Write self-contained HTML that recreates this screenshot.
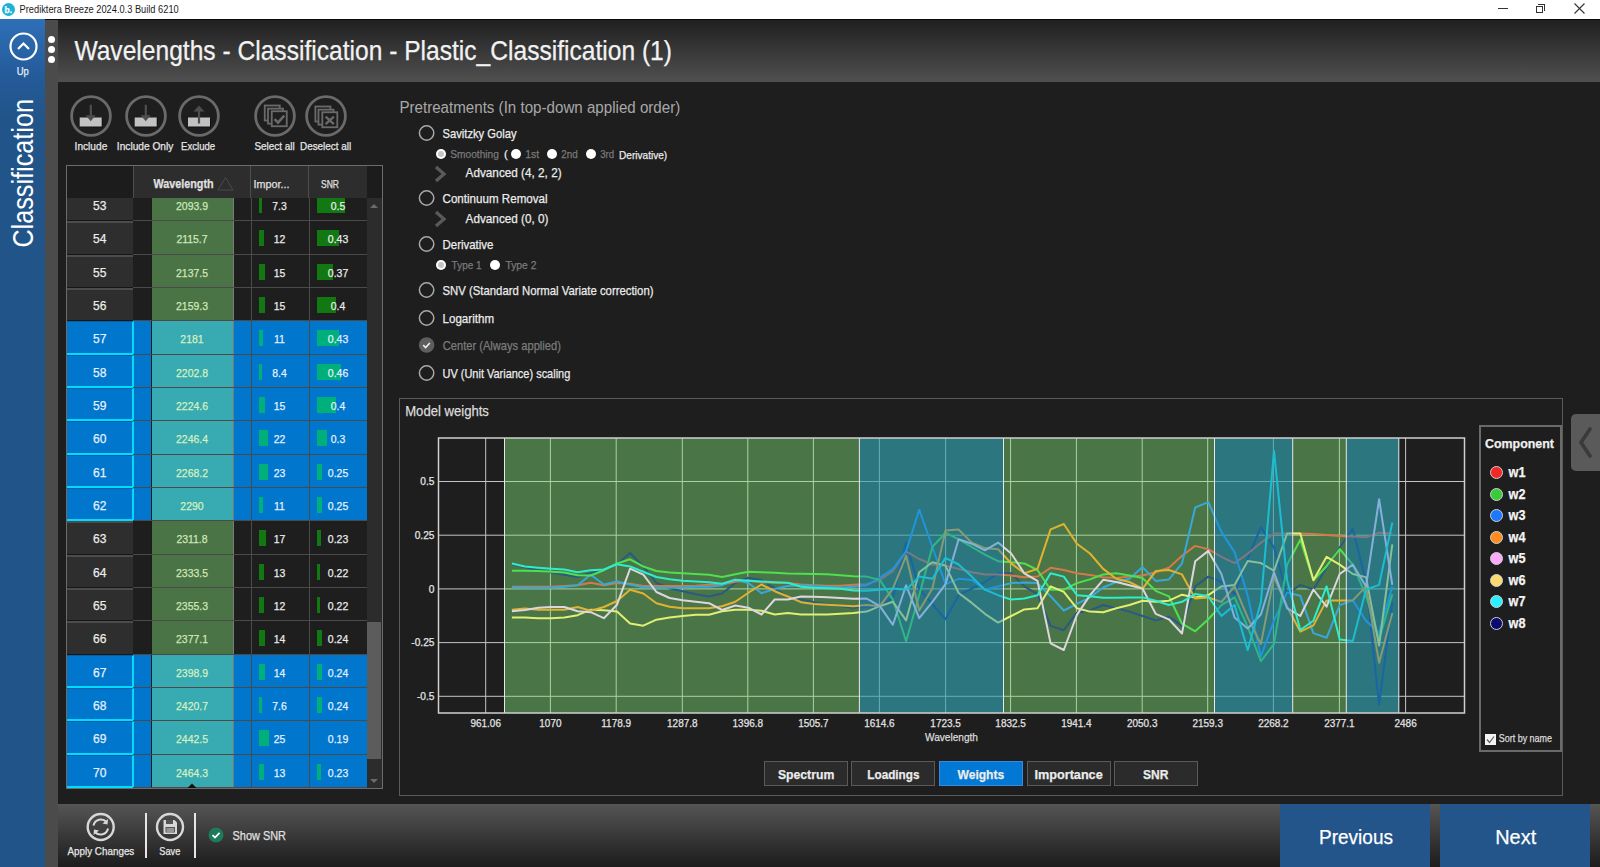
<!DOCTYPE html>
<html><head><meta charset="utf-8"><style>
*{margin:0;padding:0;box-sizing:border-box}
html,body{width:1600px;height:867px;overflow:hidden;background:#1e1e1e;font-family:"Liberation Sans",sans-serif;}
.abs{position:absolute}
</style></head><body>
<div class="abs" style="left:0;top:0;width:1600px;height:19px;background:#fff"></div><div class="abs" style="left:1.6px;top:2.8px;width:13px;height:13px;border-radius:50%;background:#1cb3d6"></div><div class="abs" style="left:1498px;top:8px;width:10px;height:1px;background:#333"></div><div class="abs" style="left:1536px;top:6px;width:7px;height:7px;border:1px solid #333"></div><div class="abs" style="left:1538px;top:4px;width:7px;height:7px;border-top:1px solid #333;border-right:1px solid #333"></div><svg class="abs" style="left:1574px;top:3px" width="11" height="11"><path d="M0.5 0.5L10.5 10.5M10.5 0.5L0.5 10.5" stroke="#333" stroke-width="1.1"/></svg><div class="abs" style="left:0;top:19px;width:45px;height:848px;background:linear-gradient(#2e6fb6 0px,#235a98 60px,#215489 100px,#215489 848px)"></div><svg class="abs" style="left:8px;top:31px" width="32" height="32"><circle cx="15.5" cy="15.5" r="13" fill="none" stroke="#fff" stroke-width="2.2"/><path d="M10 18L15.5 12.5L21 18" fill="none" stroke="#fff" stroke-width="2.2"/></svg><div class="abs" style="left:45px;top:19px;width:13px;height:848px;background:#4b4b4b"></div><div class="abs" style="left:48px;top:35.5px;width:7px;height:7px;border-radius:50%;background:#fff"></div><div class="abs" style="left:48px;top:45.5px;width:7px;height:7px;border-radius:50%;background:#fff"></div><div class="abs" style="left:48px;top:55.5px;width:7px;height:7px;border-radius:50%;background:#fff"></div><div class="abs" style="left:58px;top:19px;width:1542px;height:63px;background:linear-gradient(#1f1f1f,#505050)"></div><div class="abs" style="left:45px;top:19px;width:1555px;height:1px;background:#0a0a0a"></div><div class="abs" style="left:58px;top:804px;width:1542px;height:63px;background:linear-gradient(#555555,#1c1c1c)"></div><svg class="abs" style="left:84px;top:811px" width="34" height="34"><circle cx="16.7" cy="16" r="13" fill="none" stroke="#d8d8d8" stroke-width="2.4"/><path d="M9.5 14.5A7.5 7.5 0 0 1 22.5 11" fill="none" stroke="#d8d8d8" stroke-width="2"/><path d="M24 8L23.5 13.5L18.5 12.5Z" fill="#d8d8d8"/><path d="M24 17.5A7.5 7.5 0 0 1 11 21" fill="none" stroke="#d8d8d8" stroke-width="2"/><path d="M9.5 24L10 18.5L15 19.5Z" fill="#d8d8d8"/></svg><div class="abs" style="left:144.5px;top:813px;width:2px;height:45px;background:#e6e6e6"></div><svg class="abs" style="left:154px;top:811px" width="34" height="34"><circle cx="16" cy="16" r="13" fill="none" stroke="#d8d8d8" stroke-width="2.4"/><path d="M9.5 9H20.5L23 11.5V23H9.5Z" fill="#d8d8d8"/><rect x="12" y="9" width="7" height="4" fill="#555"/><rect x="11.5" y="16" width="9.5" height="5.5" fill="#555"/><rect x="12.5" y="17.5" width="7.5" height="1" fill="#d8d8d8"/><rect x="12.5" y="19.5" width="7.5" height="1" fill="#d8d8d8"/></svg><div class="abs" style="left:194px;top:813px;width:2px;height:45px;background:#e6e6e6"></div><svg class="abs" style="left:208px;top:827px" width="16" height="16"><circle cx="8" cy="8" r="7.5" fill="#1d7a5c"/><path d="M4.5 8.2L7 10.5L11.5 5.8" fill="none" stroke="#fff" stroke-width="1.8"/></svg><div class="abs" style="left:1280px;top:804px;width:150px;height:63px;background:#23548a"></div><div class="abs" style="left:1440px;top:804px;width:150px;height:63px;background:#23548a"></div><svg class="abs" style="left:68.3px;top:92.5px" width="46" height="46"><circle cx="23" cy="23" r="19.4" fill="none" stroke="#6a6a6a" stroke-width="2.8"/><rect x="12.7" y="25.5" width="22" height="9" fill="#111"/><rect x="11.7" y="24.5" width="22" height="9" fill="#c2c2c2"/><rect x="21.7" y="11.7" width="2.2" height="12" fill="#4e4e4e"/><path d="M17.7 22.3H27.7L22.7 28.3Z" fill="#4e4e4e"/></svg><svg class="abs" style="left:122.80000000000001px;top:92.5px" width="46" height="46"><circle cx="23" cy="23" r="19.4" fill="none" stroke="#6a6a6a" stroke-width="2.8"/><rect x="12.7" y="25.5" width="22" height="9" fill="#111"/><rect x="11.7" y="24.5" width="22" height="9" fill="#c2c2c2"/><rect x="21.7" y="11.7" width="2.2" height="12" fill="#4e4e4e"/><path d="M17.7 22.3H27.7L22.7 28.3Z" fill="#4e4e4e"/></svg><svg class="abs" style="left:176px;top:92.5px" width="46" height="46"><circle cx="23" cy="23" r="19.4" fill="none" stroke="#6a6a6a" stroke-width="2.8"/><rect x="13" y="25.5" width="22" height="9" fill="#111"/><rect x="12" y="24.5" width="22" height="9" fill="#c2c2c2"/><rect x="21.9" y="18" width="2.2" height="12.5" fill="#4e4e4e"/><path d="M17.5 18.5H28.5L23 12.5Z" fill="#4e4e4e"/></svg><svg class="abs" style="left:251.5px;top:92.75px" width="46" height="46"><circle cx="23" cy="23" r="19.4" fill="none" stroke="#6a6a6a" stroke-width="2.8"/><rect x="12.75" y="12.5" width="15" height="15" fill="none" stroke="#6a6a6a" stroke-width="1.8"/><rect x="16" y="15.65" width="15" height="15" fill="#1e1e1e" stroke="#6a6a6a" stroke-width="1.8"/><rect x="19.75" y="18.25" width="15" height="15" fill="#1e1e1e" stroke="#6a6a6a" stroke-width="1.8"/><path d="M22.5 26.15L26 29.55L32.25 22.65" fill="none" stroke="#6a6a6a" stroke-width="2.6"/></svg><svg class="abs" style="left:302.6px;top:92.75px" width="46" height="46"><circle cx="23" cy="23" r="19.4" fill="none" stroke="#6a6a6a" stroke-width="2.8"/><rect x="12.4" y="13.5" width="15" height="15" fill="none" stroke="#6a6a6a" stroke-width="1.8"/><rect x="15.5" y="16.65" width="15" height="15" fill="#1e1e1e" stroke="#6a6a6a" stroke-width="1.8"/><rect x="19.3" y="19.25" width="15" height="15" fill="#1e1e1e" stroke="#6a6a6a" stroke-width="1.8"/><path d="M22.6 23.7L30.9 31.1M30.9 23.7L22.6 31.1" fill="none" stroke="#6a6a6a" stroke-width="2.4"/></svg><div class="abs" style="left:66px;top:165px;width:317px;height:624px;border:1px solid #6c6c6c;background:#1e1e1e"></div><div class="abs" style="left:67px;top:198px;width:300px;height:590px;overflow:hidden"><div class="abs" style="left:65.5px;top:-10px;width:234.5px;height:33px;background:#1e1e1e"></div><div class="abs" style="left:0;top:-10px;width:65.5px;height:33px;background:#2e2e2e;border-top:2px solid #4c4c4c;border-bottom:1px solid #161616"></div><div class="abs" style="left:83.6px;top:-10px;width:83px;height:33px;background:#4a7346;border-left:1px solid #1a1a1a;border-right:1px solid #7a7a7a"></div><div class="abs" style="left:192px;top:-1px;width:2.9px;height:16px;background:#127812"></div><div class="abs" style="left:250px;top:-1px;width:27.9px;height:16px;background:#127812"></div><div class="abs" style="left:65.5px;top:22px;width:234.5px;height:1px;background:#4a4a4a"></div><div class="abs" style="left:65.5px;top:23px;width:234.5px;height:34px;background:#1e1e1e"></div><div class="abs" style="left:0;top:23px;width:65.5px;height:34px;background:#2e2e2e;border-top:2px solid #4c4c4c;border-bottom:1px solid #161616"></div><div class="abs" style="left:83.6px;top:23px;width:83px;height:34px;background:#4a7346;border-left:1px solid #1a1a1a;border-right:1px solid #7a7a7a"></div><div class="abs" style="left:192px;top:32px;width:4.8px;height:16px;background:#127812"></div><div class="abs" style="left:250px;top:32px;width:21.6px;height:16px;background:#127812"></div><div class="abs" style="left:65.5px;top:56px;width:234.5px;height:1px;background:#4a4a4a"></div><div class="abs" style="left:65.5px;top:57px;width:234.5px;height:33px;background:#1e1e1e"></div><div class="abs" style="left:0;top:57px;width:65.5px;height:33px;background:#2e2e2e;border-top:2px solid #4c4c4c;border-bottom:1px solid #161616"></div><div class="abs" style="left:83.6px;top:57px;width:83px;height:33px;background:#4a7346;border-left:1px solid #1a1a1a;border-right:1px solid #7a7a7a"></div><div class="abs" style="left:192px;top:66px;width:6.0px;height:16px;background:#127812"></div><div class="abs" style="left:250px;top:66px;width:16.2px;height:16px;background:#127812"></div><div class="abs" style="left:65.5px;top:89px;width:234.5px;height:1px;background:#4a4a4a"></div><div class="abs" style="left:65.5px;top:90px;width:234.5px;height:33px;background:#1e1e1e"></div><div class="abs" style="left:0;top:90px;width:65.5px;height:33px;background:#2e2e2e;border-top:2px solid #4c4c4c;border-bottom:1px solid #161616"></div><div class="abs" style="left:83.6px;top:90px;width:83px;height:33px;background:#4a7346;border-left:1px solid #1a1a1a;border-right:1px solid #7a7a7a"></div><div class="abs" style="left:192px;top:99px;width:6.0px;height:16px;background:#127812"></div><div class="abs" style="left:250px;top:99px;width:18.9px;height:16px;background:#127812"></div><div class="abs" style="left:65.5px;top:122px;width:234.5px;height:1px;background:#4a4a4a"></div><div class="abs" style="left:65.5px;top:123px;width:234.5px;height:34px;background:#0077cc"></div><div class="abs" style="left:0;top:123px;width:67px;height:34px;background:#0077cc;border-top:1px solid #0060a8;border-bottom:2px solid #00dcff;border-right:2px solid #00dcff"></div><div class="abs" style="left:83.6px;top:123px;width:83px;height:34px;background:#37abb1;border-left:1px solid #1a1a1a;border-right:1px solid #7a7a7a"></div><div class="abs" style="left:192px;top:132px;width:4.4px;height:16px;background:#00b07a"></div><div class="abs" style="left:250px;top:132px;width:21.6px;height:16px;background:#00b07a"></div><div class="abs" style="left:65.5px;top:156px;width:234.5px;height:1px;background:#4a4a4a"></div><div class="abs" style="left:65.5px;top:157px;width:234.5px;height:33px;background:#0077cc"></div><div class="abs" style="left:0;top:157px;width:67px;height:33px;background:#0077cc;border-top:1px solid #0060a8;border-bottom:2px solid #00dcff;border-right:2px solid #00dcff"></div><div class="abs" style="left:83.6px;top:157px;width:83px;height:33px;background:#37abb1;border-left:1px solid #1a1a1a;border-right:1px solid #7a7a7a"></div><div class="abs" style="left:192px;top:166px;width:3.4px;height:16px;background:#00b07a"></div><div class="abs" style="left:250px;top:166px;width:24.3px;height:16px;background:#00b07a"></div><div class="abs" style="left:65.5px;top:189px;width:234.5px;height:1px;background:#4a4a4a"></div><div class="abs" style="left:65.5px;top:190px;width:234.5px;height:33px;background:#0077cc"></div><div class="abs" style="left:0;top:190px;width:67px;height:33px;background:#0077cc;border-top:1px solid #0060a8;border-bottom:2px solid #00dcff;border-right:2px solid #00dcff"></div><div class="abs" style="left:83.6px;top:190px;width:83px;height:33px;background:#37abb1;border-left:1px solid #1a1a1a;border-right:1px solid #7a7a7a"></div><div class="abs" style="left:192px;top:199px;width:6.0px;height:16px;background:#00b07a"></div><div class="abs" style="left:250px;top:199px;width:18.9px;height:16px;background:#00b07a"></div><div class="abs" style="left:65.5px;top:222px;width:234.5px;height:1px;background:#4a4a4a"></div><div class="abs" style="left:65.5px;top:223px;width:234.5px;height:34px;background:#0077cc"></div><div class="abs" style="left:0;top:223px;width:67px;height:34px;background:#0077cc;border-top:1px solid #0060a8;border-bottom:2px solid #00dcff;border-right:2px solid #00dcff"></div><div class="abs" style="left:83.6px;top:223px;width:83px;height:34px;background:#37abb1;border-left:1px solid #1a1a1a;border-right:1px solid #7a7a7a"></div><div class="abs" style="left:192px;top:232px;width:8.8px;height:16px;background:#00b07a"></div><div class="abs" style="left:250px;top:232px;width:9.9px;height:16px;background:#00b07a"></div><div class="abs" style="left:65.5px;top:256px;width:234.5px;height:1px;background:#4a4a4a"></div><div class="abs" style="left:65.5px;top:257px;width:234.5px;height:33px;background:#0077cc"></div><div class="abs" style="left:0;top:257px;width:67px;height:33px;background:#0077cc;border-top:1px solid #0060a8;border-bottom:2px solid #00dcff;border-right:2px solid #00dcff"></div><div class="abs" style="left:83.6px;top:257px;width:83px;height:33px;background:#37abb1;border-left:1px solid #1a1a1a;border-right:1px solid #7a7a7a"></div><div class="abs" style="left:192px;top:266px;width:9.2px;height:16px;background:#00b07a"></div><div class="abs" style="left:250px;top:266px;width:5.4px;height:16px;background:#00b07a"></div><div class="abs" style="left:65.5px;top:289px;width:234.5px;height:1px;background:#4a4a4a"></div><div class="abs" style="left:65.5px;top:290px;width:234.5px;height:33px;background:#0077cc"></div><div class="abs" style="left:0;top:290px;width:67px;height:33px;background:#0077cc;border-top:1px solid #0060a8;border-bottom:2px solid #00dcff;border-right:2px solid #00dcff"></div><div class="abs" style="left:83.6px;top:290px;width:83px;height:33px;background:#37abb1;border-left:1px solid #1a1a1a;border-right:1px solid #7a7a7a"></div><div class="abs" style="left:192px;top:299px;width:4.4px;height:16px;background:#00b07a"></div><div class="abs" style="left:250px;top:299px;width:5.4px;height:16px;background:#00b07a"></div><div class="abs" style="left:65.5px;top:322px;width:234.5px;height:1px;background:#4a4a4a"></div><div class="abs" style="left:65.5px;top:323px;width:234.5px;height:34px;background:#1e1e1e"></div><div class="abs" style="left:0;top:323px;width:65.5px;height:34px;background:#2e2e2e;border-top:2px solid #4c4c4c;border-bottom:1px solid #161616"></div><div class="abs" style="left:83.6px;top:323px;width:83px;height:34px;background:#4a7346;border-left:1px solid #1a1a1a;border-right:1px solid #7a7a7a"></div><div class="abs" style="left:192px;top:332px;width:6.8px;height:16px;background:#127812"></div><div class="abs" style="left:250px;top:332px;width:3.6px;height:16px;background:#127812"></div><div class="abs" style="left:65.5px;top:356px;width:234.5px;height:1px;background:#4a4a4a"></div><div class="abs" style="left:65.5px;top:357px;width:234.5px;height:33px;background:#1e1e1e"></div><div class="abs" style="left:0;top:357px;width:65.5px;height:33px;background:#2e2e2e;border-top:2px solid #4c4c4c;border-bottom:1px solid #161616"></div><div class="abs" style="left:83.6px;top:357px;width:83px;height:33px;background:#4a7346;border-left:1px solid #1a1a1a;border-right:1px solid #7a7a7a"></div><div class="abs" style="left:192px;top:366px;width:5.2px;height:16px;background:#127812"></div><div class="abs" style="left:250px;top:366px;width:2.7px;height:16px;background:#127812"></div><div class="abs" style="left:65.5px;top:389px;width:234.5px;height:1px;background:#4a4a4a"></div><div class="abs" style="left:65.5px;top:390px;width:234.5px;height:33px;background:#1e1e1e"></div><div class="abs" style="left:0;top:390px;width:65.5px;height:33px;background:#2e2e2e;border-top:2px solid #4c4c4c;border-bottom:1px solid #161616"></div><div class="abs" style="left:83.6px;top:390px;width:83px;height:33px;background:#4a7346;border-left:1px solid #1a1a1a;border-right:1px solid #7a7a7a"></div><div class="abs" style="left:192px;top:399px;width:4.8px;height:16px;background:#127812"></div><div class="abs" style="left:250px;top:399px;width:2.7px;height:16px;background:#127812"></div><div class="abs" style="left:65.5px;top:422px;width:234.5px;height:1px;background:#4a4a4a"></div><div class="abs" style="left:65.5px;top:423px;width:234.5px;height:34px;background:#1e1e1e"></div><div class="abs" style="left:0;top:423px;width:65.5px;height:34px;background:#2e2e2e;border-top:2px solid #4c4c4c;border-bottom:1px solid #161616"></div><div class="abs" style="left:83.6px;top:423px;width:83px;height:34px;background:#4a7346;border-left:1px solid #1a1a1a;border-right:1px solid #7a7a7a"></div><div class="abs" style="left:192px;top:432px;width:5.6px;height:16px;background:#127812"></div><div class="abs" style="left:250px;top:432px;width:4.5px;height:16px;background:#127812"></div><div class="abs" style="left:65.5px;top:456px;width:234.5px;height:1px;background:#4a4a4a"></div><div class="abs" style="left:65.5px;top:457px;width:234.5px;height:33px;background:#0077cc"></div><div class="abs" style="left:0;top:457px;width:67px;height:33px;background:#0077cc;border-top:1px solid #0060a8;border-bottom:2px solid #00dcff;border-right:2px solid #00dcff"></div><div class="abs" style="left:83.6px;top:457px;width:83px;height:33px;background:#37abb1;border-left:1px solid #1a1a1a;border-right:1px solid #7a7a7a"></div><div class="abs" style="left:192px;top:466px;width:5.6px;height:16px;background:#00b07a"></div><div class="abs" style="left:250px;top:466px;width:4.5px;height:16px;background:#00b07a"></div><div class="abs" style="left:65.5px;top:489px;width:234.5px;height:1px;background:#4a4a4a"></div><div class="abs" style="left:65.5px;top:490px;width:234.5px;height:33px;background:#0077cc"></div><div class="abs" style="left:0;top:490px;width:67px;height:33px;background:#0077cc;border-top:1px solid #0060a8;border-bottom:2px solid #00dcff;border-right:2px solid #00dcff"></div><div class="abs" style="left:83.6px;top:490px;width:83px;height:33px;background:#37abb1;border-left:1px solid #1a1a1a;border-right:1px solid #7a7a7a"></div><div class="abs" style="left:192px;top:499px;width:3.0px;height:16px;background:#00b07a"></div><div class="abs" style="left:250px;top:499px;width:4.5px;height:16px;background:#00b07a"></div><div class="abs" style="left:65.5px;top:522px;width:234.5px;height:1px;background:#4a4a4a"></div><div class="abs" style="left:65.5px;top:523px;width:234.5px;height:34px;background:#0077cc"></div><div class="abs" style="left:0;top:523px;width:67px;height:34px;background:#0077cc;border-top:1px solid #0060a8;border-bottom:2px solid #00dcff;border-right:2px solid #00dcff"></div><div class="abs" style="left:83.6px;top:523px;width:83px;height:34px;background:#37abb1;border-left:1px solid #1a1a1a;border-right:1px solid #7a7a7a"></div><div class="abs" style="left:192px;top:532px;width:10.0px;height:16px;background:#00b07a"></div><div class="abs" style="left:65.5px;top:556px;width:234.5px;height:1px;background:#4a4a4a"></div><div class="abs" style="left:65.5px;top:557px;width:234.5px;height:33px;background:#0077cc"></div><div class="abs" style="left:0;top:557px;width:67px;height:33px;background:#0077cc;border-top:1px solid #0060a8;border-bottom:2px solid #00dcff;border-right:2px solid #00dcff"></div><div class="abs" style="left:83.6px;top:557px;width:83px;height:33px;background:#37abb1;border-left:1px solid #1a1a1a;border-right:1px solid #7a7a7a"></div><div class="abs" style="left:192px;top:566px;width:5.2px;height:16px;background:#00b07a"></div><div class="abs" style="left:250px;top:566px;width:3.6px;height:16px;background:#00b07a"></div><div class="abs" style="left:65.5px;top:589px;width:234.5px;height:1px;background:#4a4a4a"></div><div class="abs" style="left:183.5px;top:0;width:1px;height:590px;background:#4a4a4a"></div><div class="abs" style="left:241.5px;top:0;width:1px;height:590px;background:#4a4a4a"></div></div><div class="abs" style="left:67px;top:166px;width:66px;height:32px;background:#1c1c1c"></div><div class="abs" style="left:133px;top:166px;width:234px;height:32px;background:#2d2d2d"></div><div class="abs" style="left:133px;top:166px;width:1px;height:32px;background:#4e4e4e"></div><div class="abs" style="left:250px;top:166px;width:1px;height:32px;background:#4e4e4e"></div><div class="abs" style="left:308px;top:166px;width:1px;height:32px;background:#4e4e4e"></div><svg class="abs" style="left:217px;top:176px" width="17" height="15"><path d="M1 14L8.5 1.5L16 14Z" fill="none" stroke="#4a4a4a" stroke-width="1"/></svg><div class="abs" style="left:367px;top:166px;width:15px;height:32px;background:#1c1c1c"></div><div class="abs" style="left:367px;top:198px;width:15px;height:590px;background:#2c2c2c"></div><div class="abs" style="left:367px;top:622px;width:14px;height:137px;background:#5c5c5c"></div><svg class="abs" style="left:369px;top:202px" width="10" height="8"><path d="M1 6L5 2L9 6Z" fill="#6a6a6a"/></svg><svg class="abs" style="left:369px;top:777px" width="10" height="8"><path d="M1 2L5 6L9 2Z" fill="#6a6a6a"/></svg><svg class="abs" style="left:187px;top:782px" width="10" height="6"><path d="M0.5 6L5 1.5L9.5 6Z" fill="#111"/></svg><svg class="abs" style="left:417px;top:123.75px" width="20" height="18"><circle cx="9.6" cy="9" r="7.2" fill="none" stroke="#a8a8a8" stroke-width="1.5"/></svg><div class="abs" style="left:435.9px;top:149.1px;width:10px;height:10px;border-radius:50%;background:#fff"></div><div class="abs" style="left:437.59999999999997px;top:150.79999999999998px;width:6.6px;height:6.6px;border-radius:50%;background:#c4c4c4"></div><div class="abs" style="left:510.9px;top:149.1px;width:10px;height:10px;border-radius:50%;background:#fff"></div><div class="abs" style="left:546.9px;top:149.1px;width:10px;height:10px;border-radius:50%;background:#fff"></div><div class="abs" style="left:585.9px;top:149.1px;width:10px;height:10px;border-radius:50%;background:#fff"></div><svg class="abs" style="left:433px;top:164.5px" width="16" height="18"><path d="M3 2L11 9L3 16" fill="none" stroke="#5a5a5a" stroke-width="3.3"/></svg><svg class="abs" style="left:417px;top:189px" width="20" height="18"><circle cx="9.6" cy="9" r="7.2" fill="none" stroke="#a8a8a8" stroke-width="1.5"/></svg><svg class="abs" style="left:433px;top:210px" width="16" height="18"><path d="M3 2L11 9L3 16" fill="none" stroke="#5a5a5a" stroke-width="3.3"/></svg><svg class="abs" style="left:417px;top:234.5px" width="20" height="18"><circle cx="9.6" cy="9" r="7.2" fill="none" stroke="#a8a8a8" stroke-width="1.5"/></svg><div class="abs" style="left:435.9px;top:260px;width:10px;height:10px;border-radius:50%;background:#fff"></div><div class="abs" style="left:437.59999999999997px;top:261.7px;width:6.6px;height:6.6px;border-radius:50%;background:#c4c4c4"></div><div class="abs" style="left:490.25px;top:260px;width:10px;height:10px;border-radius:50%;background:#fff"></div><svg class="abs" style="left:417px;top:281.4px" width="20" height="18"><circle cx="9.6" cy="9" r="7.2" fill="none" stroke="#a8a8a8" stroke-width="1.5"/></svg><svg class="abs" style="left:417px;top:308.75px" width="20" height="18"><circle cx="9.6" cy="9" r="7.2" fill="none" stroke="#a8a8a8" stroke-width="1.5"/></svg><svg class="abs" style="left:417px;top:336px" width="20" height="18"><circle cx="9.6" cy="9" r="7.8" fill="#5e5e5e"/><path d="M6.2 9.2L8.6 11.5L12.8 7" fill="none" stroke="#f0f0f0" stroke-width="1.6"/></svg><svg class="abs" style="left:417px;top:363.9px" width="20" height="18"><circle cx="9.6" cy="9" r="7.2" fill="none" stroke="#a8a8a8" stroke-width="1.5"/></svg><div class="abs" style="left:399px;top:397.5px;width:1164px;height:398px;border:1px solid #5a5a5a"></div><svg class="abs" style="left:0;top:0" width="1600" height="867" viewBox="0 0 1600 867"><rect x="438.5" y="438" width="1026.0" height="275" fill="#1e1e1e"/><line x1="485.7" y1="438" x2="485.7" y2="713" stroke="#c4c4c4" stroke-width="1"/><line x1="550.4" y1="438" x2="550.4" y2="713" stroke="#c4c4c4" stroke-width="1"/><line x1="616.2" y1="438" x2="616.2" y2="713" stroke="#c4c4c4" stroke-width="1"/><line x1="682.3" y1="438" x2="682.3" y2="713" stroke="#c4c4c4" stroke-width="1"/><line x1="747.8" y1="438" x2="747.8" y2="713" stroke="#c4c4c4" stroke-width="1"/><line x1="813.4" y1="438" x2="813.4" y2="713" stroke="#c4c4c4" stroke-width="1"/><line x1="879.4" y1="438" x2="879.4" y2="713" stroke="#c4c4c4" stroke-width="1"/><line x1="945.6" y1="438" x2="945.6" y2="713" stroke="#c4c4c4" stroke-width="1"/><line x1="1010.6" y1="438" x2="1010.6" y2="713" stroke="#c4c4c4" stroke-width="1"/><line x1="1076.4" y1="438" x2="1076.4" y2="713" stroke="#c4c4c4" stroke-width="1"/><line x1="1142.2" y1="438" x2="1142.2" y2="713" stroke="#c4c4c4" stroke-width="1"/><line x1="1207.7" y1="438" x2="1207.7" y2="713" stroke="#c4c4c4" stroke-width="1"/><line x1="1273.4" y1="438" x2="1273.4" y2="713" stroke="#c4c4c4" stroke-width="1"/><line x1="1339.4" y1="438" x2="1339.4" y2="713" stroke="#c4c4c4" stroke-width="1"/><line x1="1405.6" y1="438" x2="1405.6" y2="713" stroke="#c4c4c4" stroke-width="1"/><line x1="438.5" y1="481.5" x2="1464.5" y2="481.5" stroke="#c4c4c4" stroke-width="1"/><line x1="438.5" y1="535.2" x2="1464.5" y2="535.2" stroke="#c4c4c4" stroke-width="1"/><line x1="438.5" y1="588.9" x2="1464.5" y2="588.9" stroke="#c4c4c4" stroke-width="1"/><line x1="438.5" y1="642.6" x2="1464.5" y2="642.6" stroke="#c4c4c4" stroke-width="1"/><line x1="438.5" y1="696.3" x2="1464.5" y2="696.3" stroke="#c4c4c4" stroke-width="1"/><rect x="504.5" y="438" width="894.3" height="275" fill="#4a7547"/><line x1="550.4" y1="438" x2="550.4" y2="713" stroke="#a9d3a2" stroke-width="1"/><line x1="616.2" y1="438" x2="616.2" y2="713" stroke="#a9d3a2" stroke-width="1"/><line x1="682.3" y1="438" x2="682.3" y2="713" stroke="#a9d3a2" stroke-width="1"/><line x1="747.8" y1="438" x2="747.8" y2="713" stroke="#a9d3a2" stroke-width="1"/><line x1="813.4" y1="438" x2="813.4" y2="713" stroke="#a9d3a2" stroke-width="1"/><line x1="879.4" y1="438" x2="879.4" y2="713" stroke="#a9d3a2" stroke-width="1"/><line x1="945.6" y1="438" x2="945.6" y2="713" stroke="#a9d3a2" stroke-width="1"/><line x1="1010.6" y1="438" x2="1010.6" y2="713" stroke="#a9d3a2" stroke-width="1"/><line x1="1076.4" y1="438" x2="1076.4" y2="713" stroke="#a9d3a2" stroke-width="1"/><line x1="1142.2" y1="438" x2="1142.2" y2="713" stroke="#a9d3a2" stroke-width="1"/><line x1="1207.7" y1="438" x2="1207.7" y2="713" stroke="#a9d3a2" stroke-width="1"/><line x1="1273.4" y1="438" x2="1273.4" y2="713" stroke="#a9d3a2" stroke-width="1"/><line x1="1339.4" y1="438" x2="1339.4" y2="713" stroke="#a9d3a2" stroke-width="1"/><line x1="504.5" y1="481.5" x2="1398.8" y2="481.5" stroke="#a9d3a2" stroke-width="1"/><line x1="504.5" y1="535.2" x2="1398.8" y2="535.2" stroke="#a9d3a2" stroke-width="1"/><line x1="504.5" y1="588.9" x2="1398.8" y2="588.9" stroke="#a9d3a2" stroke-width="1"/><line x1="504.5" y1="642.6" x2="1398.8" y2="642.6" stroke="#a9d3a2" stroke-width="1"/><line x1="504.5" y1="696.3" x2="1398.8" y2="696.3" stroke="#a9d3a2" stroke-width="1"/><polyline points="511.9,564.2 525.0,567.2 538.2,570.2 551.3,572.5 564.4,574.7 577.6,577.0 590.7,573.2 603.9,570.2 617.0,564.2 630.1,553.0 643.3,566.5 656.4,583.0 669.6,588.2 682.7,591.2 695.8,594.2 709.0,596.5 722.1,593.5 735.3,583.0 748.4,577.7 761.5,580.0 774.7,588.2 787.8,597.2 801.0,599.5 814.1,602.2 827.2,604.0 840.4,606.2 853.5,607.7 866.7,606.2 879.8,607.3 892.9,597.4 906.1,542.6 919.2,588.6 932.4,604.0 945.5,619.3 958.6,595.2 971.8,588.6 984.9,582.1 998.1,573.3 1011.2,573.3 1024.3,586.4 1037.5,594.1 1050.6,625.9 1063.8,630.2 1076.9,612.7 1090.0,610.5 1103.2,605.0 1116.3,608.3 1129.5,611.6 1142.6,616.0 1155.7,620.4 1168.9,616.7 1182.0,625.9 1195.2,586.4 1208.3,576.6 1221.4,581.7 1234.6,594.2 1247.7,558.4 1260.9,527.2 1274.0,547.5 1287.1,594.2 1300.3,584.9 1313.4,589.5 1326.6,567.7 1339.7,547.5 1352.8,528.8 1366.0,581.7 1379.1,704.8 1392.3,602.0" fill="none" stroke="#2a5a82" stroke-width="2" stroke-linejoin="round"/><polyline points="511.9,586.7 525.0,586.7 538.2,586.7 551.3,586.7 564.4,586.0 577.6,585.2 590.7,582.7 603.9,585.2 617.0,583.0 630.1,583.7 643.3,586.0 656.4,586.0 669.6,586.0 682.7,586.0 695.8,585.7 709.0,584.8 722.1,584.2 735.3,581.8 748.4,580.7 761.5,582.2 774.7,582.7 787.8,583.0 801.0,584.5 814.1,585.2 827.2,585.7 840.4,585.7 853.5,584.8 866.7,584.2 879.8,579.9 892.9,571.1 906.1,551.4 919.2,559.0 932.4,564.5 945.5,565.6 958.6,568.9 971.8,572.2 984.9,574.4 998.1,574.4 1011.2,575.5 1024.3,577.2 1037.5,576.6 1050.6,567.8 1063.8,570.0 1076.9,573.3 1090.0,575.0 1103.2,577.2 1116.3,578.1 1129.5,576.6 1142.6,575.5 1155.7,572.2 1168.9,567.8 1182.0,555.7 1195.2,545.9 1208.3,549.2 1221.4,556.8 1234.6,563.1 1247.7,553.7 1260.9,542.8 1274.0,533.5 1287.1,533.5 1300.3,533.5 1313.4,534.1 1326.6,535.0 1339.7,536.0 1352.8,536.6 1366.0,537.2 1379.1,532.8 1392.3,533.5" fill="none" stroke="#d27a4a" stroke-width="2" stroke-linejoin="round"/><polyline points="511.9,587.2 525.0,587.8 538.2,587.8 551.3,587.8 564.4,586.7 577.6,585.2 590.7,574.7 603.9,584.5 617.0,581.5 630.1,584.5 643.3,587.2 656.4,587.8 669.6,587.8 682.7,587.5 695.8,586.7 709.0,586.7 722.1,585.2 735.3,579.7 748.4,583.0 761.5,593.2 774.7,589.0 787.8,586.0 801.0,585.2 814.1,586.0 827.2,586.7 840.4,587.8 853.5,586.7 866.7,585.3 879.8,577.7 892.9,568.9 906.1,551.4 919.2,509.7 932.4,547.0 945.5,584.2 958.6,578.8 971.8,579.9 984.9,589.7 998.1,586.4 1011.2,583.1 1024.3,582.5 1037.5,583.1 1050.6,596.3 1063.8,610.5 1076.9,603.9 1090.0,597.4 1103.2,587.5 1116.3,582.0 1129.5,578.7 1142.6,567.1 1155.7,580.9 1168.9,579.4 1182.0,563.4 1195.2,507.5 1208.3,502.1 1221.4,531.9 1234.6,552.1 1247.7,595.8 1260.9,656.5 1274.0,620.7 1287.1,592.6 1300.3,595.8 1313.4,633.1 1326.6,637.8 1339.7,605.1 1352.8,600.4 1366.0,620.7 1379.1,633.1 1392.3,586.4" fill="none" stroke="#36a8dc" stroke-width="2" stroke-linejoin="round"/><polyline points="511.9,570.7 525.0,570.7 538.2,571.0 551.3,571.7 564.4,572.5 577.6,575.2 590.7,575.5 603.9,570.2 617.0,563.5 630.1,559.3 643.3,566.5 656.4,571.0 669.6,572.5 682.7,573.2 695.8,574.0 709.0,574.7 722.1,577.0 735.3,574.3 748.4,571.7 761.5,572.2 774.7,572.8 787.8,573.4 801.0,573.7 814.1,574.0 827.2,574.3 840.4,575.2 853.5,576.2 866.7,576.6 879.8,579.9 892.9,599.6 906.1,641.2 919.2,595.2 932.4,547.0 945.5,532.7 958.6,539.3 971.8,547.0 984.9,554.7 998.1,561.2 1011.2,562.3 1024.3,563.4 1037.5,570.0 1050.6,589.7 1063.8,589.7 1076.9,583.1 1090.0,579.4 1103.2,574.4 1116.3,573.3 1129.5,575.5 1142.6,578.1 1155.7,590.8 1168.9,596.3 1182.0,623.7 1195.2,631.3 1208.3,619.3 1221.4,605.1 1234.6,597.3 1247.7,626.9 1260.9,661.2 1274.0,644.0 1287.1,564.6 1300.3,539.7 1313.4,580.2 1326.6,566.2 1339.7,549.0 1352.8,564.6 1366.0,595.8 1379.1,639.4 1392.3,594.2" fill="none" stroke="#4fe04f" stroke-width="2" stroke-linejoin="round"/><polyline points="511.9,617.5 525.0,617.5 538.2,618.2 551.3,618.2 564.4,617.5 577.6,615.2 590.7,609.7 603.9,610.3 617.0,611.5 630.1,623.4 643.3,625.7 656.4,619.7 669.6,617.5 682.7,616.0 695.8,614.8 709.0,614.8 722.1,611.2 735.3,609.7 748.4,609.7 761.5,610.7 774.7,614.5 787.8,613.0 801.0,614.5 814.1,614.5 827.2,614.5 840.4,613.7 853.5,613.0 866.7,611.6 879.8,606.2 892.9,601.8 906.1,620.4 919.2,572.2 932.4,562.3 945.5,565.6 958.6,593.0 971.8,602.9 984.9,613.8 998.1,622.6 1011.2,616.0 1024.3,609.4 1037.5,608.3 1050.6,586.4 1063.8,591.9 1076.9,608.3 1090.0,611.6 1103.2,612.3 1116.3,608.3 1129.5,605.0 1142.6,600.7 1155.7,601.8 1168.9,600.7 1182.0,594.7 1195.2,597.4 1208.3,595.2 1221.4,586.4 1234.6,584.9 1247.7,560.9 1260.9,563.1 1274.0,570.8 1287.1,533.5 1300.3,533.5 1313.4,580.2 1326.6,556.8 1339.7,564.6 1352.8,574.0 1366.0,577.1 1379.1,645.6 1392.3,544.4" fill="none" stroke="#e2ee74" stroke-width="2" stroke-linejoin="round"/><polyline points="511.9,609.7 525.0,608.5 538.2,609.7 551.3,609.7 564.4,609.7 577.6,607.0 590.7,610.7 603.9,607.0 617.0,601.0 630.1,589.7 643.3,593.5 656.4,603.2 669.6,606.7 682.7,608.2 695.8,608.2 709.0,608.2 722.1,606.2 735.3,601.7 748.4,592.7 761.5,584.5 774.7,591.2 787.8,596.5 801.0,602.2 814.1,604.0 827.2,604.7 840.4,605.5 853.5,606.2 866.7,605.1 879.8,606.2 892.9,588.6 906.1,555.8 919.2,610.5 932.4,588.6 945.5,530.5 958.6,529.5 971.8,542.6 984.9,548.1 998.1,549.2 1011.2,563.4 1024.3,573.3 1037.5,568.9 1050.6,529.4 1063.8,524.0 1076.9,543.7 1090.0,553.5 1103.2,568.9 1116.3,578.7 1129.5,582.0 1142.6,588.6 1155.7,571.1 1168.9,570.0 1182.0,574.4 1195.2,598.5 1208.3,597.4 1221.4,602.0 1234.6,586.4 1247.7,617.6 1260.9,644.0 1274.0,577.1 1287.1,606.7 1300.3,631.6 1313.4,625.4 1326.6,600.4 1339.7,600.4 1352.8,600.4 1366.0,586.4 1379.1,662.7 1392.3,612.9" fill="none" stroke="#e0b232" stroke-width="2" stroke-linejoin="round"/><polyline points="511.9,611.2 525.0,610.0 538.2,607.7 551.3,607.0 564.4,607.0 577.6,611.2 590.7,612.2 603.9,618.2 617.0,604.7 630.1,568.7 643.3,574.7 656.4,592.0 669.6,598.0 682.7,600.2 695.8,601.7 709.0,603.2 722.1,610.0 735.3,605.5 748.4,607.7 761.5,614.5 774.7,599.5 787.8,599.5 801.0,596.5 814.1,596.8 827.2,597.2 840.4,598.0 853.5,598.7 866.7,598.5 879.8,606.2 892.9,624.8 906.1,585.3 919.2,618.2 932.4,601.8 945.5,584.2 958.6,539.3 971.8,543.7 984.9,550.3 998.1,542.6 1011.2,553.5 1024.3,573.3 1037.5,580.9 1050.6,643.4 1063.8,650.0 1076.9,614.9 1090.0,595.2 1103.2,579.8 1116.3,582.0 1129.5,585.3 1142.6,588.6 1155.7,613.8 1168.9,619.3 1182.0,633.5 1195.2,561.2 1208.3,550.9 1221.4,574.0 1234.6,617.6 1247.7,628.5 1260.9,614.5 1274.0,572.4 1287.1,608.2 1300.3,616.0 1313.4,589.5 1326.6,606.7 1339.7,574.0 1352.8,564.6 1366.0,586.4 1379.1,499.2 1392.3,584.9" fill="none" stroke="#ded6de" stroke-width="2" stroke-linejoin="round"/><polyline points="511.9,563.5 525.0,566.5 538.2,567.7 551.3,568.7 564.4,569.5 577.6,572.2 590.7,570.2 603.9,569.5 617.0,564.2 630.1,566.5 643.3,571.7 656.4,577.0 669.6,579.2 682.7,580.7 695.8,581.5 709.0,582.2 722.1,583.7 735.3,579.7 748.4,580.7 761.5,581.5 774.7,582.2 787.8,582.7 801.0,586.7 814.1,587.8 827.2,588.2 840.4,588.7 853.5,590.5 866.7,590.8 879.8,589.7 892.9,588.6 906.1,589.7 919.2,576.6 932.4,578.8 945.5,557.9 958.6,564.5 971.8,576.6 984.9,589.7 998.1,595.2 1011.2,599.6 1024.3,598.5 1037.5,595.2 1050.6,573.3 1063.8,576.6 1076.9,595.2 1090.0,596.3 1103.2,597.8 1116.3,597.8 1129.5,597.4 1142.6,597.4 1155.7,600.7 1168.9,605.0 1182.0,601.8 1195.2,594.1 1208.3,596.3 1221.4,616.0 1234.6,605.1 1247.7,650.3 1260.9,602.0 1274.0,450.9 1287.1,580.2 1300.3,630.0 1313.4,620.7 1326.6,586.4 1339.7,639.4 1352.8,640.9 1366.0,589.5 1379.1,584.9 1392.3,522.6" fill="none" stroke="#2eeccc" stroke-width="2" stroke-linejoin="round"/><rect x="859.4" y="438" width="144.10000000000002" height="275" fill="rgb(0,120,212)" fill-opacity="0.4"/><rect x="1214.5" y="438" width="78.20000000000005" height="275" fill="rgb(0,120,212)" fill-opacity="0.4"/><rect x="1346.3" y="438" width="52.5" height="275" fill="rgb(0,120,212)" fill-opacity="0.4"/><line x1="504.5" y1="438" x2="504.5" y2="713" stroke="#e8e8e8" stroke-width="1"/><line x1="859.4" y1="438" x2="859.4" y2="713" stroke="#e8e8e8" stroke-width="1"/><line x1="1003.5" y1="438" x2="1003.5" y2="713" stroke="#e8e8e8" stroke-width="1"/><line x1="1214.5" y1="438" x2="1214.5" y2="713" stroke="#e8e8e8" stroke-width="1"/><line x1="1292.7" y1="438" x2="1292.7" y2="713" stroke="#e8e8e8" stroke-width="1"/><line x1="1346.3" y1="438" x2="1346.3" y2="713" stroke="#e8e8e8" stroke-width="1"/><line x1="1398.8" y1="438" x2="1398.8" y2="713" stroke="#e8e8e8" stroke-width="1"/><rect x="438.5" y="438" width="1026.0" height="275" fill="none" stroke="#d0d0d0" stroke-width="1.5"/></svg><div class="abs" style="left:1478.5px;top:425px;width:83px;height:327px;border:2px solid #6a6a6a;background:#1e1e1e"></div><div class="abs" style="left:1489.5px;top:466.0px;width:13px;height:13px;border-radius:50%;background:#f02828;border:1.5px solid #d0d0d0"></div><div class="abs" style="left:1489.5px;top:487.5px;width:13px;height:13px;border-radius:50%;background:#38cc38;border:1.5px solid #d0d0d0"></div><div class="abs" style="left:1489.5px;top:509.0px;width:13px;height:13px;border-radius:50%;background:#1e78ff;border:1.5px solid #d0d0d0"></div><div class="abs" style="left:1489.5px;top:530.5px;width:13px;height:13px;border-radius:50%;background:#ff8c1e;border:1.5px solid #d0d0d0"></div><div class="abs" style="left:1489.5px;top:552.0px;width:13px;height:13px;border-radius:50%;background:#ffa8ff;border:1.5px solid #d0d0d0"></div><div class="abs" style="left:1489.5px;top:573.5px;width:13px;height:13px;border-radius:50%;background:#ffd870;border:1.5px solid #d0d0d0"></div><div class="abs" style="left:1489.5px;top:595.0px;width:13px;height:13px;border-radius:50%;background:#28f0ff;border:1.5px solid #d0d0d0"></div><div class="abs" style="left:1489.5px;top:616.5px;width:13px;height:13px;border-radius:50%;background:#0a0a70;border:1.5px solid #d0d0d0"></div><svg class="abs" style="left:1485px;top:733.5px" width="11" height="11"><rect x="0" y="0" width="11" height="11" fill="#f4f4f4"/><path d="M2 5.5L4.5 8.5L9 2.5" fill="none" stroke="#606060" stroke-width="1.2"/></svg><div class="abs" style="left:1571px;top:414px;width:40px;height:57px;border-radius:5px;background:#5a5a5a"></div><svg class="abs" style="left:1575px;top:425px" width="20" height="36"><path d="M15 4L6 17.5L15 31" fill="none" stroke="#3a3a3a" stroke-width="3.6" stroke-linecap="round"/></svg><div class="abs" style="left:764px;top:761px;width:84px;height:25px;background:#2b2b2b;border:1px solid #5a5a5a"></div><div class="abs" style="left:851px;top:761px;width:84px;height:25px;background:#2b2b2b;border:1px solid #5a5a5a"></div><div class="abs" style="left:939px;top:761px;width:84px;height:25px;background:#0078d4;border:1px solid #3a8ad8"></div><div class="abs" style="left:1026.5px;top:761px;width:84px;height:25px;background:#2b2b2b;border:1px solid #5a5a5a"></div><div class="abs" style="left:1114px;top:761px;width:84px;height:25px;background:#2b2b2b;border:1px solid #5a5a5a"></div><svg class="abs" style="left:0;top:0;pointer-events:none" width="1600" height="867" font-family="Liberation Sans"><text x="4.50" y="12.50" font-size="9" fill="#fff" stroke="#fff" stroke-width="0.25" font-weight="bold" textLength="7.5" lengthAdjust="spacingAndGlyphs">b.</text><text x="19.60" y="12.80" font-size="10" fill="#1a1a1a" stroke="#1a1a1a" stroke-width="0" textLength="159.1" lengthAdjust="spacingAndGlyphs">Prediktera Breeze 2024.0.3 Build 6210</text><text x="16.70" y="74.90" font-size="11.5" fill="#e8eef8" stroke="#e8eef8" stroke-width="0.25" textLength="12.1" lengthAdjust="spacingAndGlyphs">Up</text><text x="33.3" y="247.6" transform="rotate(-90 33.3 247.6)" font-size="30" fill="#ffffff" textLength="148.6" lengthAdjust="spacingAndGlyphs">Classification</text><text x="74.40" y="60.00" font-size="27.6" fill="#f2f2f2" stroke="#f2f2f2" stroke-width="0.25" textLength="597.6" lengthAdjust="spacingAndGlyphs">Wavelengths - Classification - Plastic_Classification (1)</text><text x="67.50" y="855.25" font-size="11.5" fill="#e8e8e8" stroke="#e8e8e8" stroke-width="0.25" textLength="66.8" lengthAdjust="spacingAndGlyphs">Apply Changes</text><text x="159.30" y="855.25" font-size="11.5" fill="#e8e8e8" stroke="#e8e8e8" stroke-width="0.25" textLength="21.0" lengthAdjust="spacingAndGlyphs">Save</text><text x="232.50" y="840.40" font-size="12.8" fill="#e0e0e0" stroke="#e0e0e0" stroke-width="0.25" textLength="53.5" lengthAdjust="spacingAndGlyphs">Show SNR</text><text x="1319.00" y="843.50" font-size="21" fill="#ffffff" stroke="#ffffff" stroke-width="0.25" textLength="74.0" lengthAdjust="spacingAndGlyphs">Previous</text><text x="1495.20" y="843.50" font-size="21" fill="#ffffff" stroke="#ffffff" stroke-width="0.25" textLength="41.0" lengthAdjust="spacingAndGlyphs">Next</text><text x="74.60" y="150.10" font-size="11.5" fill="#e6e6e6" stroke="#e6e6e6" stroke-width="0.25" textLength="32.7" lengthAdjust="spacingAndGlyphs">Include</text><text x="116.80" y="150.10" font-size="11.5" fill="#e6e6e6" stroke="#e6e6e6" stroke-width="0.25" textLength="56.6" lengthAdjust="spacingAndGlyphs">Include Only</text><text x="181.00" y="150.10" font-size="11.5" fill="#e6e6e6" stroke="#e6e6e6" stroke-width="0.25" textLength="34.2" lengthAdjust="spacingAndGlyphs">Exclude</text><text x="254.40" y="150.10" font-size="11.5" fill="#e6e6e6" stroke="#e6e6e6" stroke-width="0.25" textLength="40.3" lengthAdjust="spacingAndGlyphs">Select all</text><text x="300.00" y="150.10" font-size="11.5" fill="#e6e6e6" stroke="#e6e6e6" stroke-width="0.25" textLength="51.2" lengthAdjust="spacingAndGlyphs">Deselect all</text><text x="93.08" y="209.50" font-size="13" fill="#ececec" stroke="#ececec" stroke-width="0.25" textLength="13.4" lengthAdjust="spacingAndGlyphs">53</text><text x="176.00" y="209.50" font-size="11.5" fill="#cfe8b8" stroke="#cfe8b8" stroke-width="0.25" textLength="32.0" lengthAdjust="spacingAndGlyphs">2093.9</text><text x="272.23" y="209.50" font-size="11.5" fill="#ececec" stroke="#ececec" stroke-width="0.25" textLength="14.5" lengthAdjust="spacingAndGlyphs">7.3</text><text x="330.73" y="209.50" font-size="11.5" fill="#ececec" stroke="#ececec" stroke-width="0.25" textLength="14.5" lengthAdjust="spacingAndGlyphs">0.5</text><text x="93.08" y="242.50" font-size="13" fill="#ececec" stroke="#ececec" stroke-width="0.25" textLength="13.4" lengthAdjust="spacingAndGlyphs">54</text><text x="176.39" y="242.50" font-size="11.5" fill="#cfe8b8" stroke="#cfe8b8" stroke-width="0.25" textLength="31.2" lengthAdjust="spacingAndGlyphs">2115.7</text><text x="273.68" y="242.50" font-size="11.5" fill="#ececec" stroke="#ececec" stroke-width="0.25" textLength="11.6" lengthAdjust="spacingAndGlyphs">12</text><text x="327.82" y="242.50" font-size="11.5" fill="#ececec" stroke="#ececec" stroke-width="0.25" textLength="20.4" lengthAdjust="spacingAndGlyphs">0.43</text><text x="93.08" y="276.50" font-size="13" fill="#ececec" stroke="#ececec" stroke-width="0.25" textLength="13.4" lengthAdjust="spacingAndGlyphs">55</text><text x="176.00" y="276.50" font-size="11.5" fill="#cfe8b8" stroke="#cfe8b8" stroke-width="0.25" textLength="32.0" lengthAdjust="spacingAndGlyphs">2137.5</text><text x="273.68" y="276.50" font-size="11.5" fill="#ececec" stroke="#ececec" stroke-width="0.25" textLength="11.6" lengthAdjust="spacingAndGlyphs">15</text><text x="327.82" y="276.50" font-size="11.5" fill="#ececec" stroke="#ececec" stroke-width="0.25" textLength="20.4" lengthAdjust="spacingAndGlyphs">0.37</text><text x="93.08" y="309.50" font-size="13" fill="#ececec" stroke="#ececec" stroke-width="0.25" textLength="13.4" lengthAdjust="spacingAndGlyphs">56</text><text x="176.00" y="309.50" font-size="11.5" fill="#cfe8b8" stroke="#cfe8b8" stroke-width="0.25" textLength="32.0" lengthAdjust="spacingAndGlyphs">2159.3</text><text x="273.68" y="309.50" font-size="11.5" fill="#ececec" stroke="#ececec" stroke-width="0.25" textLength="11.6" lengthAdjust="spacingAndGlyphs">15</text><text x="330.73" y="309.50" font-size="11.5" fill="#ececec" stroke="#ececec" stroke-width="0.25" textLength="14.5" lengthAdjust="spacingAndGlyphs">0.4</text><text x="93.08" y="342.50" font-size="13" fill="#e6f0ff" stroke="#e6f0ff" stroke-width="0.25" textLength="13.4" lengthAdjust="spacingAndGlyphs">57</text><text x="180.36" y="342.50" font-size="11.5" fill="#d8f0c0" stroke="#d8f0c0" stroke-width="0.25" textLength="23.3" lengthAdjust="spacingAndGlyphs">2181</text><text x="274.07" y="342.50" font-size="11.5" fill="#e6f0ff" stroke="#e6f0ff" stroke-width="0.25" textLength="10.9" lengthAdjust="spacingAndGlyphs">11</text><text x="327.82" y="342.50" font-size="11.5" fill="#e6f0ff" stroke="#e6f0ff" stroke-width="0.25" textLength="20.4" lengthAdjust="spacingAndGlyphs">0.43</text><text x="93.08" y="376.50" font-size="13" fill="#e6f0ff" stroke="#e6f0ff" stroke-width="0.25" textLength="13.4" lengthAdjust="spacingAndGlyphs">58</text><text x="176.00" y="376.50" font-size="11.5" fill="#d8f0c0" stroke="#d8f0c0" stroke-width="0.25" textLength="32.0" lengthAdjust="spacingAndGlyphs">2202.8</text><text x="272.23" y="376.50" font-size="11.5" fill="#e6f0ff" stroke="#e6f0ff" stroke-width="0.25" textLength="14.5" lengthAdjust="spacingAndGlyphs">8.4</text><text x="327.82" y="376.50" font-size="11.5" fill="#e6f0ff" stroke="#e6f0ff" stroke-width="0.25" textLength="20.4" lengthAdjust="spacingAndGlyphs">0.46</text><text x="93.08" y="409.50" font-size="13" fill="#e6f0ff" stroke="#e6f0ff" stroke-width="0.25" textLength="13.4" lengthAdjust="spacingAndGlyphs">59</text><text x="176.00" y="409.50" font-size="11.5" fill="#d8f0c0" stroke="#d8f0c0" stroke-width="0.25" textLength="32.0" lengthAdjust="spacingAndGlyphs">2224.6</text><text x="273.68" y="409.50" font-size="11.5" fill="#e6f0ff" stroke="#e6f0ff" stroke-width="0.25" textLength="11.6" lengthAdjust="spacingAndGlyphs">15</text><text x="330.73" y="409.50" font-size="11.5" fill="#e6f0ff" stroke="#e6f0ff" stroke-width="0.25" textLength="14.5" lengthAdjust="spacingAndGlyphs">0.4</text><text x="93.08" y="442.50" font-size="13" fill="#e6f0ff" stroke="#e6f0ff" stroke-width="0.25" textLength="13.4" lengthAdjust="spacingAndGlyphs">60</text><text x="176.00" y="442.50" font-size="11.5" fill="#d8f0c0" stroke="#d8f0c0" stroke-width="0.25" textLength="32.0" lengthAdjust="spacingAndGlyphs">2246.4</text><text x="273.68" y="442.50" font-size="11.5" fill="#e6f0ff" stroke="#e6f0ff" stroke-width="0.25" textLength="11.6" lengthAdjust="spacingAndGlyphs">22</text><text x="330.73" y="442.50" font-size="11.5" fill="#e6f0ff" stroke="#e6f0ff" stroke-width="0.25" textLength="14.5" lengthAdjust="spacingAndGlyphs">0.3</text><text x="93.08" y="476.50" font-size="13" fill="#e6f0ff" stroke="#e6f0ff" stroke-width="0.25" textLength="13.4" lengthAdjust="spacingAndGlyphs">61</text><text x="176.00" y="476.50" font-size="11.5" fill="#d8f0c0" stroke="#d8f0c0" stroke-width="0.25" textLength="32.0" lengthAdjust="spacingAndGlyphs">2268.2</text><text x="273.68" y="476.50" font-size="11.5" fill="#e6f0ff" stroke="#e6f0ff" stroke-width="0.25" textLength="11.6" lengthAdjust="spacingAndGlyphs">23</text><text x="327.82" y="476.50" font-size="11.5" fill="#e6f0ff" stroke="#e6f0ff" stroke-width="0.25" textLength="20.4" lengthAdjust="spacingAndGlyphs">0.25</text><text x="93.08" y="509.50" font-size="13" fill="#e6f0ff" stroke="#e6f0ff" stroke-width="0.25" textLength="13.4" lengthAdjust="spacingAndGlyphs">62</text><text x="180.36" y="509.50" font-size="11.5" fill="#d8f0c0" stroke="#d8f0c0" stroke-width="0.25" textLength="23.3" lengthAdjust="spacingAndGlyphs">2290</text><text x="274.07" y="509.50" font-size="11.5" fill="#e6f0ff" stroke="#e6f0ff" stroke-width="0.25" textLength="10.9" lengthAdjust="spacingAndGlyphs">11</text><text x="327.82" y="509.50" font-size="11.5" fill="#e6f0ff" stroke="#e6f0ff" stroke-width="0.25" textLength="20.4" lengthAdjust="spacingAndGlyphs">0.25</text><text x="93.08" y="542.50" font-size="13" fill="#ececec" stroke="#ececec" stroke-width="0.25" textLength="13.4" lengthAdjust="spacingAndGlyphs">63</text><text x="176.39" y="542.50" font-size="11.5" fill="#cfe8b8" stroke="#cfe8b8" stroke-width="0.25" textLength="31.2" lengthAdjust="spacingAndGlyphs">2311.8</text><text x="273.68" y="542.50" font-size="11.5" fill="#ececec" stroke="#ececec" stroke-width="0.25" textLength="11.6" lengthAdjust="spacingAndGlyphs">17</text><text x="327.82" y="542.50" font-size="11.5" fill="#ececec" stroke="#ececec" stroke-width="0.25" textLength="20.4" lengthAdjust="spacingAndGlyphs">0.23</text><text x="93.08" y="576.50" font-size="13" fill="#ececec" stroke="#ececec" stroke-width="0.25" textLength="13.4" lengthAdjust="spacingAndGlyphs">64</text><text x="176.00" y="576.50" font-size="11.5" fill="#cfe8b8" stroke="#cfe8b8" stroke-width="0.25" textLength="32.0" lengthAdjust="spacingAndGlyphs">2333.5</text><text x="273.68" y="576.50" font-size="11.5" fill="#ececec" stroke="#ececec" stroke-width="0.25" textLength="11.6" lengthAdjust="spacingAndGlyphs">13</text><text x="327.82" y="576.50" font-size="11.5" fill="#ececec" stroke="#ececec" stroke-width="0.25" textLength="20.4" lengthAdjust="spacingAndGlyphs">0.22</text><text x="93.08" y="609.50" font-size="13" fill="#ececec" stroke="#ececec" stroke-width="0.25" textLength="13.4" lengthAdjust="spacingAndGlyphs">65</text><text x="176.00" y="609.50" font-size="11.5" fill="#cfe8b8" stroke="#cfe8b8" stroke-width="0.25" textLength="32.0" lengthAdjust="spacingAndGlyphs">2355.3</text><text x="273.68" y="609.50" font-size="11.5" fill="#ececec" stroke="#ececec" stroke-width="0.25" textLength="11.6" lengthAdjust="spacingAndGlyphs">12</text><text x="327.82" y="609.50" font-size="11.5" fill="#ececec" stroke="#ececec" stroke-width="0.25" textLength="20.4" lengthAdjust="spacingAndGlyphs">0.22</text><text x="93.08" y="642.50" font-size="13" fill="#ececec" stroke="#ececec" stroke-width="0.25" textLength="13.4" lengthAdjust="spacingAndGlyphs">66</text><text x="176.00" y="642.50" font-size="11.5" fill="#cfe8b8" stroke="#cfe8b8" stroke-width="0.25" textLength="32.0" lengthAdjust="spacingAndGlyphs">2377.1</text><text x="273.68" y="642.50" font-size="11.5" fill="#ececec" stroke="#ececec" stroke-width="0.25" textLength="11.6" lengthAdjust="spacingAndGlyphs">14</text><text x="327.82" y="642.50" font-size="11.5" fill="#ececec" stroke="#ececec" stroke-width="0.25" textLength="20.4" lengthAdjust="spacingAndGlyphs">0.24</text><text x="93.08" y="676.50" font-size="13" fill="#e6f0ff" stroke="#e6f0ff" stroke-width="0.25" textLength="13.4" lengthAdjust="spacingAndGlyphs">67</text><text x="176.00" y="676.50" font-size="11.5" fill="#d8f0c0" stroke="#d8f0c0" stroke-width="0.25" textLength="32.0" lengthAdjust="spacingAndGlyphs">2398.9</text><text x="273.68" y="676.50" font-size="11.5" fill="#e6f0ff" stroke="#e6f0ff" stroke-width="0.25" textLength="11.6" lengthAdjust="spacingAndGlyphs">14</text><text x="327.82" y="676.50" font-size="11.5" fill="#e6f0ff" stroke="#e6f0ff" stroke-width="0.25" textLength="20.4" lengthAdjust="spacingAndGlyphs">0.24</text><text x="93.08" y="709.50" font-size="13" fill="#e6f0ff" stroke="#e6f0ff" stroke-width="0.25" textLength="13.4" lengthAdjust="spacingAndGlyphs">68</text><text x="176.00" y="709.50" font-size="11.5" fill="#d8f0c0" stroke="#d8f0c0" stroke-width="0.25" textLength="32.0" lengthAdjust="spacingAndGlyphs">2420.7</text><text x="272.23" y="709.50" font-size="11.5" fill="#e6f0ff" stroke="#e6f0ff" stroke-width="0.25" textLength="14.5" lengthAdjust="spacingAndGlyphs">7.6</text><text x="327.82" y="709.50" font-size="11.5" fill="#e6f0ff" stroke="#e6f0ff" stroke-width="0.25" textLength="20.4" lengthAdjust="spacingAndGlyphs">0.24</text><text x="93.08" y="742.50" font-size="13" fill="#e6f0ff" stroke="#e6f0ff" stroke-width="0.25" textLength="13.4" lengthAdjust="spacingAndGlyphs">69</text><text x="176.00" y="742.50" font-size="11.5" fill="#d8f0c0" stroke="#d8f0c0" stroke-width="0.25" textLength="32.0" lengthAdjust="spacingAndGlyphs">2442.5</text><text x="273.68" y="742.50" font-size="11.5" fill="#e6f0ff" stroke="#e6f0ff" stroke-width="0.25" textLength="11.6" lengthAdjust="spacingAndGlyphs">25</text><text x="327.82" y="742.50" font-size="11.5" fill="#e6f0ff" stroke="#e6f0ff" stroke-width="0.25" textLength="20.4" lengthAdjust="spacingAndGlyphs">0.19</text><text x="93.08" y="776.50" font-size="13" fill="#e6f0ff" stroke="#e6f0ff" stroke-width="0.25" textLength="13.4" lengthAdjust="spacingAndGlyphs">70</text><text x="176.00" y="776.50" font-size="11.5" fill="#d8f0c0" stroke="#d8f0c0" stroke-width="0.25" textLength="32.0" lengthAdjust="spacingAndGlyphs">2464.3</text><text x="273.68" y="776.50" font-size="11.5" fill="#e6f0ff" stroke="#e6f0ff" stroke-width="0.25" textLength="11.6" lengthAdjust="spacingAndGlyphs">13</text><text x="327.82" y="776.50" font-size="11.5" fill="#e6f0ff" stroke="#e6f0ff" stroke-width="0.25" textLength="20.4" lengthAdjust="spacingAndGlyphs">0.23</text><text x="153.60" y="187.60" font-size="12" fill="#e0e0e0" stroke="#e0e0e0" stroke-width="0.25" font-weight="bold" textLength="60.0" lengthAdjust="spacingAndGlyphs">Wavelength</text><text x="253.50" y="187.60" font-size="11.5" fill="#e0e0e0" stroke="#e0e0e0" stroke-width="0.25" textLength="36.0" lengthAdjust="spacingAndGlyphs">Impor...</text><text x="321.00" y="187.60" font-size="11.5" fill="#e0e0e0" stroke="#e0e0e0" stroke-width="0.25" textLength="18.0" lengthAdjust="spacingAndGlyphs">SNR</text><text x="399.40" y="113.40" font-size="15.8" fill="#a8a8a8" stroke="#a8a8a8" stroke-width="0" textLength="280.9" lengthAdjust="spacingAndGlyphs">Pretreatments (In top-down applied order)</text><text x="442.50" y="138.40" font-size="13" fill="#ececec" stroke="#ececec" stroke-width="0.25" textLength="74.1" lengthAdjust="spacingAndGlyphs">Savitzky Golay</text><text x="450.25" y="158.40" font-size="11.5" fill="#7a7a7a" stroke="#7a7a7a" stroke-width="0.25" textLength="48.6" lengthAdjust="spacingAndGlyphs">Smoothing</text><text x="504.00" y="158.40" font-size="11.5" fill="#ececec" stroke="#ececec" stroke-width="0.25" textLength="3.8" lengthAdjust="spacingAndGlyphs">(</text><text x="525.25" y="158.40" font-size="11.5" fill="#7a7a7a" stroke="#7a7a7a" stroke-width="0.25" textLength="13.9" lengthAdjust="spacingAndGlyphs">1st</text><text x="561.25" y="158.40" font-size="11.5" fill="#7a7a7a" stroke="#7a7a7a" stroke-width="0.25" textLength="16.5" lengthAdjust="spacingAndGlyphs">2nd</text><text x="600.25" y="158.40" font-size="11.5" fill="#7a7a7a" stroke="#7a7a7a" stroke-width="0.25" textLength="13.9" lengthAdjust="spacingAndGlyphs">3rd</text><text x="619.00" y="159.00" font-size="11.5" fill="#ececec" stroke="#ececec" stroke-width="0.25" textLength="48.2" lengthAdjust="spacingAndGlyphs">Derivative)</text><text x="465.60" y="176.60" font-size="13" fill="#ececec" stroke="#ececec" stroke-width="0.25" textLength="96.0" lengthAdjust="spacingAndGlyphs">Advanced (4, 2, 2)</text><text x="442.50" y="202.50" font-size="13" fill="#ececec" stroke="#ececec" stroke-width="0.25" textLength="105.1" lengthAdjust="spacingAndGlyphs">Continuum Removal</text><text x="465.60" y="222.75" font-size="13" fill="#ececec" stroke="#ececec" stroke-width="0.25" textLength="82.9" lengthAdjust="spacingAndGlyphs">Advanced (0, 0)</text><text x="442.50" y="248.75" font-size="13" fill="#ececec" stroke="#ececec" stroke-width="0.25" textLength="50.9" lengthAdjust="spacingAndGlyphs">Derivative</text><text x="451.60" y="269.00" font-size="11.5" fill="#7a7a7a" stroke="#7a7a7a" stroke-width="0.25" textLength="30.0" lengthAdjust="spacingAndGlyphs">Type 1</text><text x="505.40" y="269.00" font-size="11.5" fill="#7a7a7a" stroke="#7a7a7a" stroke-width="0.25" textLength="31.1" lengthAdjust="spacingAndGlyphs">Type 2</text><text x="442.50" y="295.25" font-size="13" fill="#ececec" stroke="#ececec" stroke-width="0.25" textLength="211.0" lengthAdjust="spacingAndGlyphs">SNV (Standard Normal Variate correction)</text><text x="442.50" y="322.80" font-size="13" fill="#ececec" stroke="#ececec" stroke-width="0.25" textLength="51.6" lengthAdjust="spacingAndGlyphs">Logarithm</text><text x="442.75" y="350.00" font-size="13" fill="#7c7c7c" stroke="#7c7c7c" stroke-width="0.25" textLength="118.1" lengthAdjust="spacingAndGlyphs">Center (Always applied)</text><text x="442.50" y="378.10" font-size="13" fill="#ececec" stroke="#ececec" stroke-width="0.25" textLength="127.8" lengthAdjust="spacingAndGlyphs">UV (Unit Variance) scaling</text><text x="405.20" y="415.80" font-size="14" fill="#dcdcdc" stroke="#dcdcdc" stroke-width="0.25" textLength="83.7" lengthAdjust="spacingAndGlyphs">Model weights</text><text x="420.34" y="485.30" font-size="10.5" fill="#e4e4e4" stroke="#e4e4e4" stroke-width="0.25" textLength="14.2" lengthAdjust="spacingAndGlyphs">0.5</text><text x="414.68" y="539.00" font-size="10.5" fill="#e4e4e4" stroke="#e4e4e4" stroke-width="0.25" textLength="19.8" lengthAdjust="spacingAndGlyphs">0.25</text><text x="428.84" y="592.70" font-size="10.5" fill="#e4e4e4" stroke="#e4e4e4" stroke-width="0.25" textLength="5.7" lengthAdjust="spacingAndGlyphs">0</text><text x="411.29" y="646.40" font-size="10.5" fill="#e4e4e4" stroke="#e4e4e4" stroke-width="0.25" textLength="23.2" lengthAdjust="spacingAndGlyphs">-0.25</text><text x="416.95" y="700.10" font-size="10.5" fill="#e4e4e4" stroke="#e4e4e4" stroke-width="0.25" textLength="17.5" lengthAdjust="spacingAndGlyphs">-0.5</text><text x="470.45" y="726.90" font-size="10.5" fill="#e4e4e4" stroke="#e4e4e4" stroke-width="0.25" textLength="30.5" lengthAdjust="spacingAndGlyphs">961.06</text><text x="539.31" y="726.90" font-size="10.5" fill="#e4e4e4" stroke="#e4e4e4" stroke-width="0.25" textLength="22.2" lengthAdjust="spacingAndGlyphs">1070</text><text x="601.32" y="726.90" font-size="10.5" fill="#e4e4e4" stroke="#e4e4e4" stroke-width="0.25" textLength="29.8" lengthAdjust="spacingAndGlyphs">1178.9</text><text x="667.05" y="726.90" font-size="10.5" fill="#e4e4e4" stroke="#e4e4e4" stroke-width="0.25" textLength="30.5" lengthAdjust="spacingAndGlyphs">1287.8</text><text x="732.55" y="726.90" font-size="10.5" fill="#e4e4e4" stroke="#e4e4e4" stroke-width="0.25" textLength="30.5" lengthAdjust="spacingAndGlyphs">1396.8</text><text x="798.15" y="726.90" font-size="10.5" fill="#e4e4e4" stroke="#e4e4e4" stroke-width="0.25" textLength="30.5" lengthAdjust="spacingAndGlyphs">1505.7</text><text x="864.15" y="726.90" font-size="10.5" fill="#e4e4e4" stroke="#e4e4e4" stroke-width="0.25" textLength="30.5" lengthAdjust="spacingAndGlyphs">1614.6</text><text x="930.35" y="726.90" font-size="10.5" fill="#e4e4e4" stroke="#e4e4e4" stroke-width="0.25" textLength="30.5" lengthAdjust="spacingAndGlyphs">1723.5</text><text x="995.35" y="726.90" font-size="10.5" fill="#e4e4e4" stroke="#e4e4e4" stroke-width="0.25" textLength="30.5" lengthAdjust="spacingAndGlyphs">1832.5</text><text x="1061.15" y="726.90" font-size="10.5" fill="#e4e4e4" stroke="#e4e4e4" stroke-width="0.25" textLength="30.5" lengthAdjust="spacingAndGlyphs">1941.4</text><text x="1126.95" y="726.90" font-size="10.5" fill="#e4e4e4" stroke="#e4e4e4" stroke-width="0.25" textLength="30.5" lengthAdjust="spacingAndGlyphs">2050.3</text><text x="1192.45" y="726.90" font-size="10.5" fill="#e4e4e4" stroke="#e4e4e4" stroke-width="0.25" textLength="30.5" lengthAdjust="spacingAndGlyphs">2159.3</text><text x="1258.15" y="726.90" font-size="10.5" fill="#e4e4e4" stroke="#e4e4e4" stroke-width="0.25" textLength="30.5" lengthAdjust="spacingAndGlyphs">2268.2</text><text x="1324.15" y="726.90" font-size="10.5" fill="#e4e4e4" stroke="#e4e4e4" stroke-width="0.25" textLength="30.5" lengthAdjust="spacingAndGlyphs">2377.1</text><text x="1394.51" y="726.90" font-size="10.5" fill="#e4e4e4" stroke="#e4e4e4" stroke-width="0.25" textLength="22.2" lengthAdjust="spacingAndGlyphs">2486</text><text x="925.00" y="740.60" font-size="11" fill="#dcdcdc" stroke="#dcdcdc" stroke-width="0.25" textLength="53.0" lengthAdjust="spacingAndGlyphs">Wavelength</text><text x="1485.00" y="448.30" font-size="13.5" fill="#f0f0f0" stroke="#f0f0f0" stroke-width="0.25" font-weight="bold" textLength="69.0" lengthAdjust="spacingAndGlyphs">Component</text><text x="1508.60" y="477.30" font-size="14.5" fill="#f4f4f4" stroke="#f4f4f4" stroke-width="0.25" font-weight="bold" textLength="16.9" lengthAdjust="spacingAndGlyphs">w1</text><text x="1508.60" y="498.80" font-size="14.5" fill="#f4f4f4" stroke="#f4f4f4" stroke-width="0.25" font-weight="bold" textLength="16.9" lengthAdjust="spacingAndGlyphs">w2</text><text x="1508.60" y="520.30" font-size="14.5" fill="#f4f4f4" stroke="#f4f4f4" stroke-width="0.25" font-weight="bold" textLength="16.9" lengthAdjust="spacingAndGlyphs">w3</text><text x="1508.60" y="541.80" font-size="14.5" fill="#f4f4f4" stroke="#f4f4f4" stroke-width="0.25" font-weight="bold" textLength="16.9" lengthAdjust="spacingAndGlyphs">w4</text><text x="1508.60" y="563.30" font-size="14.5" fill="#f4f4f4" stroke="#f4f4f4" stroke-width="0.25" font-weight="bold" textLength="16.9" lengthAdjust="spacingAndGlyphs">w5</text><text x="1508.60" y="584.80" font-size="14.5" fill="#f4f4f4" stroke="#f4f4f4" stroke-width="0.25" font-weight="bold" textLength="16.9" lengthAdjust="spacingAndGlyphs">w6</text><text x="1508.60" y="606.30" font-size="14.5" fill="#f4f4f4" stroke="#f4f4f4" stroke-width="0.25" font-weight="bold" textLength="16.9" lengthAdjust="spacingAndGlyphs">w7</text><text x="1508.60" y="627.80" font-size="14.5" fill="#f4f4f4" stroke="#f4f4f4" stroke-width="0.25" font-weight="bold" textLength="16.9" lengthAdjust="spacingAndGlyphs">w8</text><text x="1498.80" y="741.60" font-size="10.5" fill="#dcdcdc" stroke="#dcdcdc" stroke-width="0.25" textLength="53.2" lengthAdjust="spacingAndGlyphs">Sort by name</text><text x="777.90" y="779.10" font-size="13.5" fill="#ececec" stroke="#ececec" stroke-width="0.25" font-weight="bold" textLength="56.4" lengthAdjust="spacingAndGlyphs">Spectrum</text><text x="867.30" y="779.10" font-size="13.5" fill="#ececec" stroke="#ececec" stroke-width="0.25" font-weight="bold" textLength="52.2" lengthAdjust="spacingAndGlyphs">Loadings</text><text x="957.50" y="779.10" font-size="13.5" fill="#ececec" stroke="#ececec" stroke-width="0.25" font-weight="bold" textLength="46.7" lengthAdjust="spacingAndGlyphs">Weights</text><text x="1034.50" y="779.10" font-size="13.5" fill="#ececec" stroke="#ececec" stroke-width="0.25" font-weight="bold" textLength="68.2" lengthAdjust="spacingAndGlyphs">Importance</text><text x="1143.00" y="779.10" font-size="13.5" fill="#ececec" stroke="#ececec" stroke-width="0.25" font-weight="bold" textLength="25.4" lengthAdjust="spacingAndGlyphs">SNR</text></svg></body></html>
